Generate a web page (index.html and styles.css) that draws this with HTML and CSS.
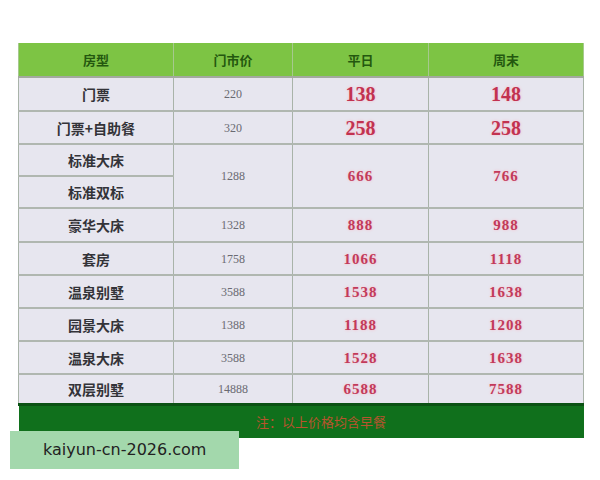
FILE: index.html
```html
<!DOCTYPE html>
<html lang="zh">
<head>
<meta charset="utf-8">
<link rel="stylesheet" href="styles.css">
</head>
<body>
<div class="page">
  <table class="price">
    <colgroup>
      <col class="c1"><col class="c2"><col class="c3"><col class="c4">
    </colgroup>
    <thead>
      <tr><th>房型</th><th>门市价</th><th>平日</th><th>周末</th></tr>
    </thead>
    <tbody>
      <tr class="r34"><td class="name">门票</td><td class="rack">220</td><td class="big">138</td><td class="big">148</td></tr>
      <tr><td class="name">门票+自助餐</td><td class="rack">320</td><td class="big">258</td><td class="big">258</td></tr>
      <tr class="r32"><td class="name">标准大床</td><td class="rack" rowspan="2">1288</td><td class="red" rowspan="2">666</td><td class="red" rowspan="2">766</td></tr>
      <tr class="r32"><td class="name">标准双标</td></tr>
      <tr class="r34"><td class="name">豪华大床</td><td class="rack">1328</td><td class="red">888</td><td class="red">988</td></tr>
      <tr><td class="name">套房</td><td class="rack">1758</td><td class="red">1066</td><td class="red">1118</td></tr>
      <tr><td class="name">温泉别墅</td><td class="rack">3588</td><td class="red">1538</td><td class="red">1638</td></tr>
      <tr><td class="name">园景大床</td><td class="rack">1388</td><td class="red">1188</td><td class="red">1208</td></tr>
      <tr><td class="name">温泉大床</td><td class="rack">3588</td><td class="red">1528</td><td class="red">1638</td></tr>
      <tr class="r30"><td class="name">双层别墅</td><td class="rack">14888</td><td class="red">6588</td><td class="red">7588</td></tr>
    </tbody>
    <tfoot>
      <tr><td colspan="4" class="foot">注：以上价格均含早餐</td></tr>
    </tfoot>
  </table>
  <div class="mark">kaiyun-cn-2026.com</div>
</div>
</body>
</html>
```

FILE: styles.css
```css
html, body {
  margin: 0;
  padding: 0;
  background: #ffffff;
}

.page {
  position: relative;
  width: 600px;
  height: 480px;
  padding: 43px 0 0 18px;
  box-sizing: border-box;
  font-family: "Noto Sans CJK SC", "Liberation Sans", sans-serif;
}

.price {
  border-collapse: collapse;
  table-layout: fixed;
  width: 565px;
}

.c1 { width: 155px; }
.c2 { width: 119px; }
.c3 { width: 136px; }
.c4 { width: 155px; }

.price th {
  height: 33px;
  padding: 0;
  line-height: 16px;
  background: #7dc444;
  color: #24580f;
  font-size: 13px;
  font-weight: 700;
  border-left: 1px solid #a6c98e;
  border-right: 1px solid #a6c98e;
  border-bottom: 2px solid #a3aa9e;
}

.price td {
  height: 31px;
  padding: 0;
  line-height: 16px;
  text-align: center;
  background: #e7e6ef;
  border: 1px solid #a9b3a9;
}

.price tbody tr td {
  border-bottom: 2px solid #b0b7b0;
}

.price tr.r34 td { height: 32px; }
.price tr.r32 td { height: 30px; }
.price tr.r30 td { height: 28px; }

.name {
  color: #333338;
  font-size: 14px;
  font-weight: 700;
}

.rack {
  color: #6a6a72;
  font-size: 12px;
  font-family: "Liberation Serif", serif;
}

.red {
  color: #c23a5a;
  font-size: 15px;
  font-weight: 700;
  font-family: "Liberation Serif", serif;
  letter-spacing: 1px;
  text-shadow: 0 0 3px #f6b8c6;
}

.big {
  color: #c23250;
  font-size: 20px;
  font-weight: 700;
  font-family: "Liberation Serif", serif;
  text-shadow: 0 0 3px #f6b8c6;
}

.price td.foot {
  height: 32px;
  background: #10701c;
  border: none;
  border-top: 3px solid #0b5214;
  color: #b8542e;
  font-size: 13px;
  text-align: center;
  padding-left: 40px;
}

.mark {
  position: absolute;
  left: 10px;
  top: 431px;
  width: 229px;
  height: 38px;
  background: #a3d8ac;
  color: #222222;
  font-family: "DejaVu Sans", sans-serif;
  font-size: 16px;
  line-height: 38px;
  padding-left: 33px;
  box-sizing: border-box;
}
```
